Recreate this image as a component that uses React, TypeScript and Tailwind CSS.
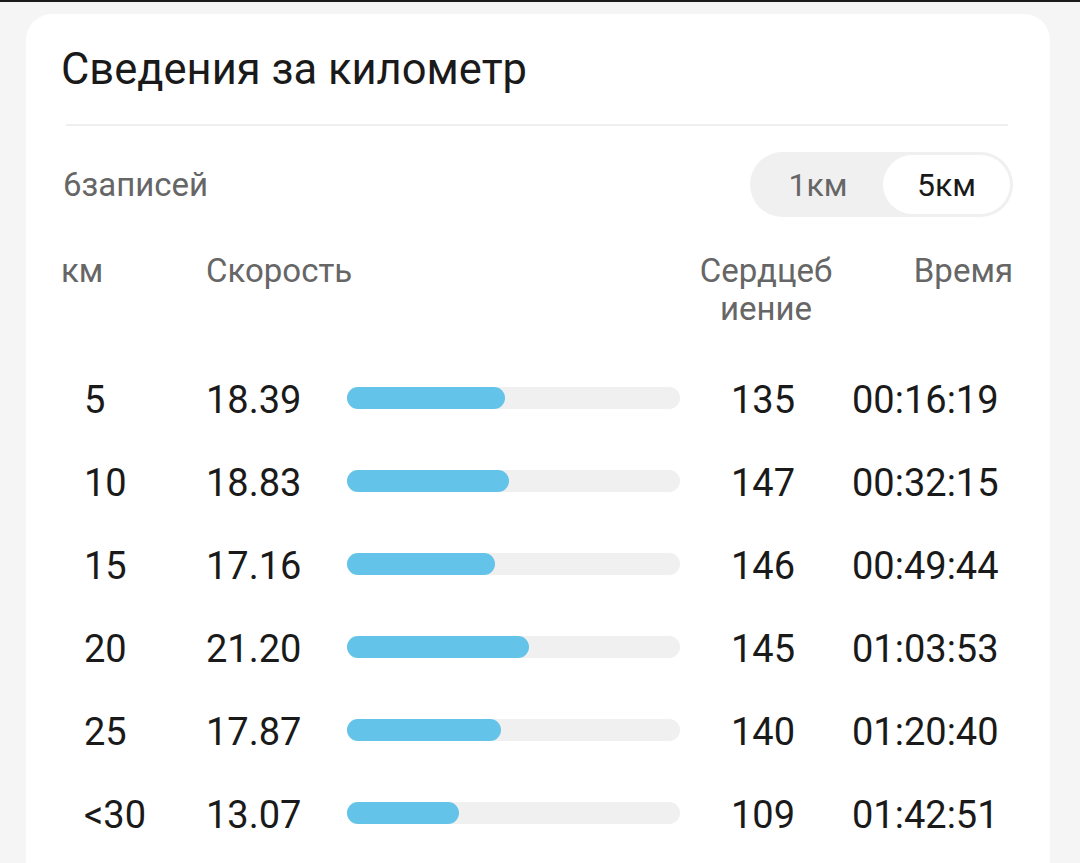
import React from "react";

const rows = [
  { km: "5", speed: "18.39", fill: 158, hr: "135", time: "00:16:19" },
  { km: "10", speed: "18.83", fill: 162, hr: "147", time: "00:32:15" },
  { km: "15", speed: "17.16", fill: 148, hr: "146", time: "00:49:44" },
  { km: "20", speed: "21.20", fill: 182, hr: "145", time: "01:03:53" },
  { km: "25", speed: "17.87", fill: 154, hr: "140", time: "01:20:40" },
  { km: "<30", speed: "13.07", fill: 112, hr: "109", time: "01:42:51" },
];

export default function App() {
  return (
    <div
      className="w-[1080px] h-[863px] bg-[#f5f5f5] overflow-hidden border-t-2 border-[#1a1a1a]"
      style={{ fontFamily: "Roboto, 'Noto Sans', sans-serif" }}
    >
      <div className="ml-[26px] mt-[12px] w-[1024px] h-[900px] bg-white rounded-[26px] pl-[35px] pr-[37px]">
        <div className="pt-[30px] text-[43.5px] leading-[52px] text-[#1a1a1a]">
          Сведения за километр
        </div>
        <div className="mt-[28px] ml-[5px] w-[942px] h-[2px] bg-[#efefef]" />
        <div className="mt-[26px] flex items-center justify-between h-[65px]">
          <div className="text-[33px] leading-[38px] text-[#666666] pl-[2px]">6записей</div>
          <div className="flex p-[3px] rounded-full bg-[#f0f0f0] h-[65px]">
            <div className="w-[130px] flex items-center justify-center text-[32px] text-[#666666]">
              1км
            </div>
            <div className="w-[127px] flex items-center justify-center rounded-full bg-white text-[32px] text-[#1a1a1a]">
              5км
            </div>
          </div>
        </div>
        <div className="mt-[35px] flex text-[33px] leading-[38px] text-[#666666]">
          <div className="w-[145px]">км</div>
          <div className="w-[474px]">Скорость</div>
          <div className="w-[172px] text-center">
            Сердцеб
            <br />
            иение
          </div>
          <div className="flex-1 text-right">Время</div>
        </div>
        <div className="mt-[31px] flex flex-col text-[38px] text-[#1a1a1a]">
          {rows.map((r) => (
            <div key={r.km} className="h-[83px] flex items-center">
              <div className="w-[145px] pl-[23px]">{r.km}</div>
              <div className="w-[141px]">{r.speed}</div>
              <div className="w-[333px] h-[22px] mb-[5px] rounded-full bg-[#f0f0f0] flex">
                <div className="h-full rounded-full bg-[#63c3e8]" style={{ width: r.fill }} />
              </div>
              <div className="w-[166px] text-center">{r.hr}</div>
              <div className="flex-1 pl-[6px]">{r.time}</div>
            </div>
          ))}
        </div>
      </div>
    </div>
  );
}
